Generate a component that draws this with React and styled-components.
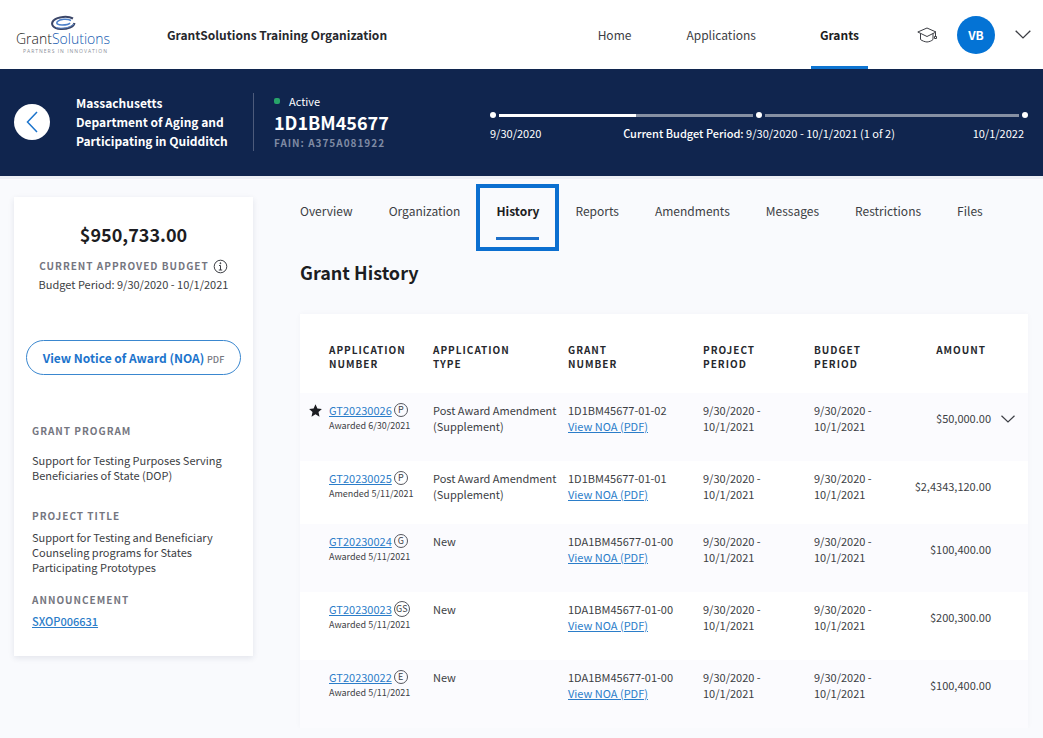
import React from "react";
import styled, { createGlobalStyle } from "styled-components";

const GlobalStyle = createGlobalStyle`
  *, *::before, *::after {
    box-sizing: border-box;
  }

  body {
    margin: 0;
    background-color: #f9fafd;
    color: #3c3e44;
    font-family: "Noto Sans CJK SC", "Noto Sans", sans-serif;
    font-size: 11px;
    line-height: 16px;
  }

  h1, h2, h3, p {
    margin: 0;
  }

  button {
    font-family: inherit;
    cursor: pointer;
  }
`;

const Header = styled.header`
  display: flex;
  align-items: center;
  height: 69px;
  padding: 0 12px 0 15px;
  background-color: #ffffff;
`;

const LogoLink = styled.a`
  display: block;
  width: 98px;
  height: 40px;
  margin-right: 54px;
`;

const OrgName = styled.p`
  flex: 1;
  color: #26282d;
  font-size: 12px;
  font-weight: 700;
`;

const MainNav = styled.nav`
  display: flex;
  align-self: stretch;
  gap: 55px;
  margin-right: 49px;
`;

const MainNavLink = styled.a`
  display: flex;
  align-items: center;
  padding: ${props => (props.$active ? "4px 9px 0" : "4px 0 0")};
  border-bottom: 3px solid ${props => (props.$active ? "#0d74d1" : "transparent")};
  color: ${props => (props.$active ? "#1c1d22" : "#3c3e44")};
  font-size: 12px;
  font-weight: ${props => (props.$active ? 700 : 400)};
  text-decoration: none;
`;

const IconButton = styled.button`
  display: flex;
  padding: 0;
  border: none;
  background: none;
  color: #3c3e44;
`;

const Avatar = styled.button`
  width: 38px;
  height: 38px;
  margin: 0 20px;
  padding: 0;
  border: none;
  border-radius: 50%;
  background-color: #0473d5;
  color: #ffffff;
  font-size: 12px;
  font-weight: 700;
`;

const Banner = styled.section`
  display: flex;
  align-items: center;
  height: 107px;
  padding: 0 15px 2px 14px;
  background-color: #10254e;
  color: #ffffff;
`;

const BackButton = styled.button`
  display: flex;
  align-items: center;
  justify-content: center;
  width: 36px;
  height: 36px;
  margin-right: 26px;
  padding: 0;
  border: none;
  border-radius: 50%;
  background-color: #ffffff;
  color: #1c74cc;
`;

const Grantee = styled.h1`
  width: 177px;
  font-size: 12px;
  font-weight: 700;
  line-height: 19px;
`;

const GrantId = styled.div`
  width: 237px;
  height: 58px;
  padding-left: 20px;
  border-left: 1px solid #4d5b7b;
`;

const Status = styled.p`
  display: flex;
  align-items: center;
  gap: 9px;

  &::before {
    content: "";
    width: 6px;
    height: 6px;
    border-radius: 2px;
    background-color: #27a469;
  }
`;

const GrantNumber = styled.p`
  font-size: 18px;
  font-weight: 700;
  line-height: 26px;
`;

const Fain = styled.p`
  color: #7f8aa3;
  font-size: 10px;
  font-weight: 700;
  letter-spacing: 1px;
`;

const Timeline = styled.div`
  flex: 1;
  padding-top: 10px;
`;

const Track = styled.div`
  display: flex;
  align-items: center;
  gap: 3px;
`;

const Dot = styled.span`
  width: 6px;
  height: 6px;
  border-radius: 50%;
  background-color: #ffffff;
`;

const Bar = styled.span`
  flex: 1;
  height: 3px;
  background-color: #8690a3;
`;

const Elapsed = styled.span`
  display: block;
  height: 3px;
  background-color: #ffffff;
`;

const TrackLabels = styled.div`
  display: grid;
  grid-template-columns: 1fr auto 1fr;
  margin-top: 7px;

  span:last-child {
    padding-right: 4px;
    text-align: right;
  }

  strong {
    font-weight: 500;
  }
`;

const Page = styled.main`
  display: flex;
  align-items: flex-start;
  padding: 0 15px 0 14px;
  border-top: 3px solid #eceff5;
`;

const Summary = styled.aside`
  display: flex;
  flex-direction: column;
  flex: none;
  width: 239px;
  margin: 18px 47px 0 0;
  padding: 23px 12px 27px;
  background-color: #ffffff;
  box-shadow: 0 2px 6px rgba(30, 40, 80, 0.1);
`;

const Total = styled.p`
  margin-bottom: 10px;
  color: #1c1d22;
  font-size: 18px;
  font-weight: 700;
  line-height: 28px;
  text-align: center;
`;

const Caption = styled.h3`
  display: flex;
  align-items: center;
  justify-content: ${props => (props.$center ? "center" : "flex-start")};
  gap: 4px;
  color: #75767f;
  font-size: 10px;
  font-weight: 700;
  letter-spacing: 1px;
  line-height: 16px;
`;

const BudgetPeriod = styled.p`
  margin-top: 2px;
  text-align: center;
`;

const NoaButton = styled.button`
  height: 35px;
  margin: 48px 0;
  padding: 0;
  border: 1px solid #3a87cf;
  border-radius: 18px;
  background-color: #ffffff;
  color: #1c74cc;
  font-size: 12px;
  font-weight: 700;

  small {
    color: #75767f;
    font-size: 9px;
    font-weight: 500;
  }
`;

const Fact = styled.section`
  padding: 0 6px;
  margin-bottom: ${props => props.$gap}px;
`;

const FactText = styled.p`
  margin-top: ${props => (props.$spaced ? 14 : 6)}px;
  line-height: 15px;
`;

const TextLink = styled.a`
  color: #2b7dc9;
  font-weight: ${props => (props.$bold ? 500 : 400)};
  text-decoration: underline;
`;

const Content = styled.div`
  flex: 1;
  min-width: 0;
`;

const Tabs = styled.nav`
  display: flex;
  gap: 36px;
  height: 71px;
`;

const Tab = styled.a`
  position: relative;
  height: 61px;
  padding-top: 24px;
  border-bottom: 3px solid ${props => (props.$active ? "#1c6fc9" : "transparent")};
  color: ${props => (props.$active ? "#1c1d22" : "#3c3e44")};
  font-size: 12px;
  font-weight: ${props => (props.$active ? 700 : 400)};
  text-decoration: none;

  &::after {
    content: "";
    display: ${props => (props.$active ? "block" : "none")};
    position: absolute;
    top: 5px;
    right: -20px;
    bottom: -14px;
    left: -20px;
    border: 4px solid #0b6fd0;
  }
`;

const Heading = styled.h2`
  margin-top: 7px;
  color: #1c1d22;
  font-size: 18px;
  font-weight: 700;
  line-height: 30px;
`;

const Panel = styled.div`
  margin-top: 27px;
  background-color: #ffffff;
  box-shadow: 0 0 6px rgba(30, 40, 80, 0.03);
`;

const Table = styled.table`
  width: 100%;
  border-collapse: collapse;
  table-layout: fixed;
`;

const Col = styled.col`
  width: ${props => (props.$width ? `${props.$width}px` : "auto")};
`;

const HeadCell = styled.th`
  height: 79px;
  padding: ${props => (props.$right ? "29px 5px 0 0" : "29px 0 0")};
  color: #26282d;
  font-size: 10px;
  font-weight: 700;
  letter-spacing: 1px;
  line-height: 14px;
  text-align: ${props => (props.$right ? "right" : "left")};
  vertical-align: top;
`;

const Row = styled.tr`
  height: ${props => (props.$compact ? 63 : 68)}px;
  background-color: ${props => (props.$shaded ? "#fbfbfe" : "#ffffff")};
`;

const Cell = styled.td`
  padding: 9px 0 0;
  line-height: 16px;
  vertical-align: top;
`;

const StarCell = styled(Cell)`
  padding: 11px 0 0 9px;

  svg {
    display: block;
  }
`;

const AmountCell = styled(Cell)`
  padding-top: 17px;
  text-align: right;
`;

const ExpandCell = styled(Cell)`
  padding: 22px 0 0 10px;
`;

const ApplicationLine = styled.div`
  display: flex;
  align-items: center;
  gap: 2px;
  height: 16px;
`;

const TypeBadge = styled.span`
  display: inline-flex;
  align-items: center;
  justify-content: center;
  width: ${props => (props.$wide ? 16 : 14)}px;
  height: ${props => (props.$wide ? 16 : 14)}px;
  border: 1px solid #55575e;
  border-radius: 50%;
  font-size: 9px;
  line-height: 12px;
`;

const StatusDate = styled.div`
  font-size: 9px;
  line-height: 16px;
`;

const tabs = [
  "Overview",
  "Organization",
  "History",
  "Reports",
  "Amendments",
  "Messages",
  "Restrictions",
  "Files",
];

const applications = [
  { id: "GT20230026", badge: "P", status: "Awarded 6/30/2021", type: ["Post Award Amendment", "(Supplement)"], grant: "1D1BM45677-01-02", amount: "$50,000.00", starred: true },
  { id: "GT20230025", badge: "P", status: "Amended 5/11/2021", type: ["Post Award Amendment", "(Supplement)"], grant: "1D1BM45677-01-01", amount: "$2,4343,120.00", compact: true },
  { id: "GT20230024", badge: "G", status: "Awarded 5/11/2021", type: ["New"], grant: "1DA1BM45677-01-00", amount: "$100,400.00" },
  { id: "GT20230023", badge: "GS", status: "Awarded 5/11/2021", type: ["New"], grant: "1DA1BM45677-01-00", amount: "$200,300.00" },
  { id: "GT20230022", badge: "E", status: "Awarded 5/11/2021", type: ["New"], grant: "1DA1BM45677-01-00", amount: "$100,400.00" },
];

const Logo = () => (
  <svg width="98" height="40" viewBox="0 0 98 40" role="img" aria-label="GrantSolutions">
    <path d="M58 3.500C53 .8 43 1.500 38.500 5.500c-3.500 4 0 8 7 8.500 7 .4 13.500-2.500 14-6" fill="none" stroke="#3b4668" strokeWidth="2" />
    <path d="M56 5.500C52 3.500 45 4 42.500 6.500c-2 2.500 1 3.500 4.500 3.500 3 0 7-.5 8-2" fill="none" stroke="#4a7fc9" strokeWidth="1.500" />
    <path d="M41 12.500c6 1.500 14 .5 18-3.500" fill="none" stroke="#5f8bcb" strokeWidth="1" />
    <text x="1" y="29" fontFamily="Open Sans, sans-serif" fontSize="14" fontWeight="300" fill="#1c1d22">
      Grant<tspan fill="#1259b0">Solutions</tspan>
    </text>
    <text x="8" y="38" fontFamily="Open Sans, sans-serif" fontSize="5" letterSpacing="1" fill="#8b8f98">
      PARTNERS IN INNOVATION
    </text>
  </svg>
);

const Chevron = ({ width = 14, height = 8 }) => (
  <svg width={width} height={height} viewBox="0 0 14 8" fill="none" stroke="currentColor" strokeWidth="1.2">
    <path d="M0.5 0.7 7 7l6.500-6.300" />
  </svg>
);

// mortarboard with a tassel on the right
const CapIcon = () => (
  <svg width="20" height="16" viewBox="0 0 20 16" fill="none" stroke="currentColor" strokeWidth="1" strokeLinejoin="round">
    <path d="M0.800 5 10 1l9 4-9 4.500z" />
    <path d="M3.500 6.500V12.500c2 1.500 4 2.200 6.500 2.500 2.500-.3 4.500-1 6-2.500V6.500" />
    <path d="M18.500 5.500V9M17.500 9.500h2v2h-2z" />
  </svg>
);

const InfoIcon = () => (
  <svg width="15" height="15" viewBox="0 0 15 15" fill="none" stroke="#3c3e44">
    <circle cx="7.500" cy="7.500" r="6.300" />
    <path d="M6 6.500h1.500V11M5.800 11h3.400" />
    <circle cx="7.400" cy="4.200" r="0.500" fill="#3c3e44" />
  </svg>
);

const StarIcon = () => (
  <svg width="13" height="13" viewBox="0 0 13 13" role="img" aria-label="Starred">
    <path d="M6.500 0.200 8.400 4.600l4.500.4-3.400 3.100 1 4.600-4-2.400-4 2.400 1-4.600L.1 5l4.500-.4z" fill="#1c1d22" />
  </svg>
);

const TopBar = () => (
  <Header>
    <LogoLink href="#home">
      <Logo />
    </LogoLink>
    <OrgName>GrantSolutions Training Organization</OrgName>
    <MainNav>
      <MainNavLink href="#home">Home</MainNavLink>
      <MainNavLink href="#applications">Applications</MainNavLink>
      <MainNavLink href="#grants" $active>Grants</MainNavLink>
    </MainNav>
    <IconButton type="button" aria-label="Training">
      <CapIcon />
    </IconButton>
    <Avatar type="button">VB</Avatar>
    <IconButton type="button" aria-label="Account menu">
      <Chevron width={16} height={9} />
    </IconButton>
  </Header>
);

const GrantBanner = ({ elapsed }) => (
  <Banner>
    <BackButton type="button" aria-label="Back">
      <svg width="12" height="22" viewBox="0 0 12 22" fill="none" stroke="currentColor" strokeWidth="1.5">
        <path d="M11 1 1.500 11 11 21" />
      </svg>
    </BackButton>
    <Grantee>
      Massachusetts<br />Department of Aging and<br />Participating in Quidditch
    </Grantee>
    <GrantId>
      <Status>Active</Status>
      <GrantNumber>1D1BM45677</GrantNumber>
      <Fain>FAIN: A375A081922</Fain>
    </GrantId>
    <Timeline>
      <Track>
        <Dot />
        <Bar>
          <Elapsed style={{ width: `${elapsed}%` }} />
        </Bar>
        <Dot />
        <Bar />
        <Dot />
      </Track>
      <TrackLabels>
        <span>9/30/2020</span>
        <span><strong>Current Budget Period:</strong> 9/30/2020 - 10/1/2021 (1 of 2)</span>
        <span>10/1/2022</span>
      </TrackLabels>
    </Timeline>
  </Banner>
);

const GrantSummary = () => (
  <Summary>
    <Total>$950,733.00</Total>
    <Caption $center>
      CURRENT APPROVED BUDGET <InfoIcon />
    </Caption>
    <BudgetPeriod>Budget Period: 9/30/2020 - 10/1/2021</BudgetPeriod>
    <NoaButton type="button">
      View Notice of Award (NOA) <small>PDF</small>
    </NoaButton>
    <Fact $gap={25}>
      <Caption>GRANT PROGRAM</Caption>
      <FactText $spaced>
        Support for Testing Purposes Serving<br />Beneficiaries of State (DOP)
      </FactText>
    </Fact>
    <Fact $gap={17}>
      <Caption>PROJECT TITLE</Caption>
      <FactText>
        Support for Testing and Beneficiary<br />Counseling programs for States<br />Participating Prototypes
      </FactText>
    </Fact>
    <Fact $gap={0}>
      <Caption>ANNOUNCEMENT</Caption>
      <FactText>
        <TextLink href="#announcement" $bold>SXOP006631</TextLink>
      </FactText>
    </Fact>
  </Summary>
);

const ApplicationRow = ({ application, shaded }) => (
  <Row $shaded={shaded} $compact={application.compact}>
    <StarCell>{application.starred && <StarIcon />}</StarCell>
    <Cell>
      <ApplicationLine>
        <TextLink href="#application">{application.id}</TextLink>
        <TypeBadge $wide={application.badge.length > 1}>{application.badge}</TypeBadge>
      </ApplicationLine>
      <StatusDate>{application.status}</StatusDate>
    </Cell>
    <Cell>
      {application.type.map(line => <div key={line}>{line}</div>)}
    </Cell>
    <Cell>
      <div>{application.grant}</div>
      <TextLink href="#noa">View NOA (PDF)</TextLink>
    </Cell>
    <Cell>9/30/2020 -<br />10/1/2021</Cell>
    <Cell>9/30/2020 -<br />10/1/2021</Cell>
    <AmountCell>{application.amount}</AmountCell>
    <ExpandCell>
      {application.starred && (
        <IconButton type="button" aria-label="Expand row">
          <Chevron />
        </IconButton>
      )}
    </ExpandCell>
  </Row>
);

const HistoryTable = () => (
  <Table>
    <colgroup>
      <Col $width={29} />
      <Col $width={104} />
      <Col $width={135} />
      <Col $width={135} />
      <Col $width={111} />
      <Col $width={90} />
      <Col />
      <Col $width={37} />
    </colgroup>
    <thead>
      <tr>
        <HeadCell />
        <HeadCell>APPLICATION<br />NUMBER</HeadCell>
        <HeadCell>APPLICATION<br />TYPE</HeadCell>
        <HeadCell>GRANT<br />NUMBER</HeadCell>
        <HeadCell>PROJECT<br />PERIOD</HeadCell>
        <HeadCell>BUDGET<br />PERIOD</HeadCell>
        <HeadCell $right>AMOUNT</HeadCell>
        <HeadCell />
      </tr>
    </thead>
    <tbody>
      {applications.map((application, index) => (
        <ApplicationRow
          key={application.id}
          application={application}
          shaded={index % 2 === 0}
        />
      ))}
    </tbody>
  </Table>
);

const App = () => {
  return (
    <>
      <GlobalStyle />
      <TopBar />
      <GrantBanner elapsed={54} />
      <Page>
        <GrantSummary />
        <Content>
          <Tabs>
            {tabs.map(tab => (
              <Tab key={tab} href={`#${tab.toLowerCase()}`} $active={tab === "History"}>
                {tab}
              </Tab>
            ))}
          </Tabs>
          <Heading>Grant History</Heading>
          <Panel>
            <HistoryTable />
          </Panel>
        </Content>
      </Page>
    </>
  );
};

export default App;
